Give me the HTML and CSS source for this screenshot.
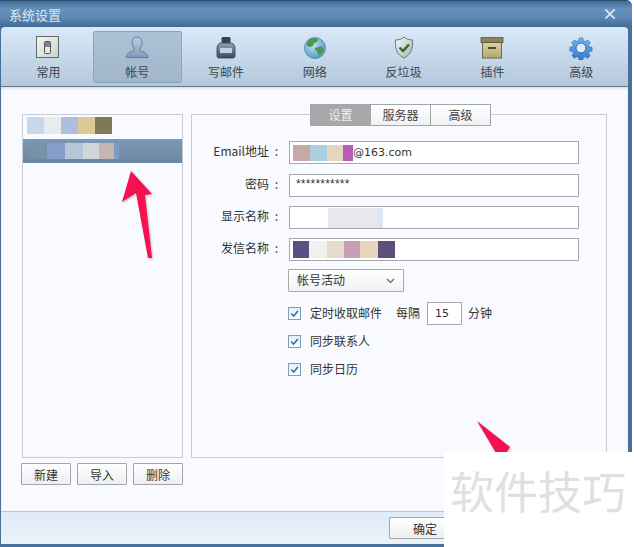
FILE: index.html
```html
<!DOCTYPE html>
<html lang="zh-CN">
<head>
    <meta charset="UTF-8">
    <meta name="viewport" content="width=device-width, initial-scale=1.0">
    <title>系统设置</title>
    <link rel="stylesheet" href="styles.css">
</head>
<body>
    <div class="window">
        <div class="titlebar">
            <span class="title">系统设置</span>
            <svg class="close" width="12" height="12" viewBox="0 0 13 13"><path d="M1.5 1.5l10 10M11.5 1.5l-10 10" stroke="#d5e2ef" stroke-width="2.2"/></svg>
        </div>

        <div class="toolbar">
            <div class="tool">
                <svg width="24" height="24" viewBox="0 0 24 24">
                    <defs><linearGradient id="gBox" x1="0" y1="0" x2="1" y2="1"><stop offset="0" stop-color="#f4f6f2"/><stop offset="1" stop-color="#c9d2ca"/></linearGradient></defs>
                    <rect x="0.5" y="0.5" width="22" height="21" fill="url(#gBox)" stroke="#5d6a70"/>
                    <rect x="8.5" y="5.5" width="6" height="12" rx="1" fill="#e6e9e6" stroke="#4d5559"/>
                    <rect x="9" y="6" width="5" height="5" fill="#7d8689"/>
                </svg>
                <span>常用</span>
            </div>
            <div class="tool tool-active">
                <svg width="24" height="24" viewBox="0 0 24 24">
                    <defs><linearGradient id="gUser" x1="0" y1="0" x2="0" y2="1"><stop offset="0" stop-color="#b8cde2"/><stop offset="1" stop-color="#7f9cbc"/></linearGradient></defs>
                    <path d="M12 1c-3.600 0-5 2.800-5 5.800 0 2.300 1 4.200 2.200 5.400v2.200c-1.800 1.200-7.700 2-8.200 7.100h22c-.5-5.100-6.400-5.900-8.200-7.100v-2.200c1.200-1.200 2.200-3.100 2.200-5.400 0-3-1.400-5.800-5-5.800z" fill="url(#gUser)" stroke="#5f7d9c"/>
                </svg>
                <span>帐号</span>
            </div>
            <div class="tool">
                <svg width="24" height="24" viewBox="0 0 24 24">
                    <defs><linearGradient id="gInk" x1="0" y1="0" x2="0" y2="1"><stop offset="0" stop-color="#8ea4bb"/><stop offset="1" stop-color="#2f4a66"/></linearGradient></defs>
                    <rect x="7.500" y="1" width="9" height="6" rx="1.500" fill="#39414a"/>
                    <path d="M6 7h12c2 1 3 3 3 6v7c0 1-1 2-2 2H5c-1 0-2-1-2-2v-7c0-3 1-5 3-6z" fill="url(#gInk)" stroke="#2d3d50" stroke-width=".8"/>
                    <rect x="6" y="12" width="12" height="5" fill="#c3d0dc"/>
                </svg>
                <span>写邮件</span>
            </div>
            <div class="tool">
                <svg width="24" height="24" viewBox="0 0 24 24">
                    <defs><radialGradient id="gGlobe" cx=".4" cy=".35" r=".8"><stop offset="0" stop-color="#bfe2f2"/><stop offset="1" stop-color="#3f8dbf"/></radialGradient></defs>
                    <circle cx="12" cy="12" r="10.500" fill="url(#gGlobe)" stroke="#4d86a8" stroke-width=".8"/>
                    <path d="M7 3c3-1.500 6-1 8 0l-1 3-3 1-1 3-3 1-3-1c-1-3 1-6 3-7zM12 12l6-2 3 3c-.5 3-2 5-4 6.500l-2-1.500-1-3-2-1z" fill="#4f9a4a"/>
                </svg>
                <span>网络</span>
            </div>
            <div class="tool">
                <svg width="24" height="24" viewBox="0 0 24 24">
                    <defs><linearGradient id="gShield" x1="0" y1="0" x2="1" y2="1"><stop offset="0" stop-color="#f7f8f6"/><stop offset="1" stop-color="#aab4b4"/></linearGradient></defs>
                    <path d="M12 1c2 2 5 3 8.500 3 .5 8-1 14.500-8.500 18C4.500 18.500 3 12 3.500 4 7 4 10 3 12 1z" fill="url(#gShield)" stroke="#5f6b70" stroke-width=".9"/>
                    <path d="M7.500 11.500l3.500 3.500 6-6.500" fill="none" stroke="#2f6b24" stroke-width="2.400"/>
                </svg>
                <span>反垃圾</span>
            </div>
            <div class="tool">
                <svg width="24" height="24" viewBox="0 0 24 24">
                    <defs><linearGradient id="gCrate" x1="0" y1="0" x2="0" y2="1"><stop offset="0" stop-color="#dcd2a8"/><stop offset="1" stop-color="#b3a673"/></linearGradient></defs>
                    <rect x="2.500" y="6.500" width="19" height="15.500" fill="url(#gCrate)" stroke="#6f6643"/>
                    <rect x="1" y="1.500" width="22" height="5" fill="#8d8357" stroke="#5e5738" stroke-width=".8"/>
                    <rect x="8" y="11" width="8" height="2" fill="#4f4a33"/>
                </svg>
                <span>插件</span>
            </div>
            <div class="tool">
                <svg width="24" height="24" viewBox="0 0 24 24">
                    <defs><linearGradient id="gGear" x1="0" y1="0" x2="0" y2="1"><stop offset="0" stop-color="#79b4f0"/><stop offset="1" stop-color="#2f77cf"/></linearGradient></defs>
                    <path d="M10 1h4l.6 3 2.100.9 2.600-1.700 2.800 2.800-1.700 2.600.9 2.100 3 .6v4l-3 .6-.9 2.100 1.700 2.600-2.800 2.800-2.600-1.700-2.100.9-.6 3h-4l-.6-3-2.100-.9-2.600 1.700-2.800-2.800 1.700-2.600-.9-2.100-3-.6v-4l3-.6.9-2.100-1.700-2.600 2.800-2.800 2.600 1.700 2.100-.9z" transform="translate(1.200 1.200) scale(.9)" fill="url(#gGear)" stroke="#2a66b2" stroke-width=".7"/>
                    <circle cx="12" cy="12" r="5" fill="#dfeaf6" stroke="#2a66b2"/>
                </svg>
                <span>高级</span>
            </div>
        </div>

        <div class="content">
            <div class="accounts">
                <ul class="account-list">
                    <li class="account"><span class="mosaic mosaic-name1"></span></li>
                    <li class="account account-selected"><span class="mosaic mosaic-name2"></span></li>
                </ul>
                <div class="account-actions">
                    <button class="btn">新建</button>
                    <button class="btn">导入</button>
                    <button class="btn">删除</button>
                </div>
            </div>

            <div class="panel">
                <div class="tabs">
                    <div class="tab tab-active">设置</div>
                    <div class="tab">服务器</div>
                    <div class="tab">高级</div>
                </div>

                <div class="field field-first">
                    <label>Email地址 :</label>
                    <div class="input"><span class="mosaic mosaic-mail"></span><span class="latin">@163.com</span></div>
                </div>
                <div class="field">
                    <label>密码 :</label>
                    <div class="input"><span class="stars">***********</span></div>
                </div>
                <div class="field">
                    <label>显示名称 :</label>
                    <div class="input"><span class="mosaic mosaic-display"></span></div>
                </div>
                <div class="field field-last">
                    <label>发信名称 :</label>
                    <div class="input"><span class="mosaic mosaic-sender"></span></div>
                </div>

                <div class="options">
                    <div class="select">
                        <span class="select-text">帐号活动</span>
                        <svg width="9" height="6" viewBox="0 0 9 6"><path d="M1 1l3.500 3.500L8 1" fill="none" stroke="#666" stroke-width="1.200"/></svg>
                    </div>
                    <div class="check-row check-row-first">
                        <span class="check"><svg width="11" height="11" viewBox="0 0 13 13"><path d="M2.500 6.500l3 3 5-6" fill="none" stroke="#2f77a8" stroke-width="2"/></svg></span>
                        <span class="check-label">定时收取邮件</span>
                        <span class="every">每隔</span>
                        <span class="number">15</span>
                        <span class="unit">分钟</span>
                    </div>
                    <div class="check-row">
                        <span class="check"><svg width="11" height="11" viewBox="0 0 13 13"><path d="M2.500 6.500l3 3 5-6" fill="none" stroke="#2f77a8" stroke-width="2"/></svg></span>
                        <span class="check-label">同步联系人</span>
                    </div>
                    <div class="check-row">
                        <span class="check"><svg width="11" height="11" viewBox="0 0 13 13"><path d="M2.500 6.500l3 3 5-6" fill="none" stroke="#2f77a8" stroke-width="2"/></svg></span>
                        <span class="check-label">同步日历</span>
                    </div>
                </div>
            </div>
        </div>

        <div class="footer">
            <button class="btn btn-ok">确定</button>
        </div>
    </div>

    <!-- 截图上的标注和水印 -->
    <svg class="arrow arrow-one" width="36" height="90" viewBox="0 0 36 90">
        <path d="M10 0L31 23 24 24 31 87 27 87 15 22 1 31z" fill="#f5104f"/>
    </svg>
    <svg class="arrow arrow-two" width="36" height="32" viewBox="0 0 36 32">
        <path d="M1 0L34 26 30 32 20 32z" fill="#f5104f"/>
    </svg>
    <div class="watermark">软件技巧</div>
</body>
</html>
```

FILE: styles.css
```css
body {
    margin: 0;
    background: #fff;
    font-family: "Noto Sans CJK SC", "Liberation Sans", sans-serif;
    font-size: 12px;
    color: #333;
}
.window {
    width: 632px;
    height: 547px;
    box-sizing: border-box;
    padding: 0 4px 3px 1px;
    display: flex;
    flex-direction: column;
    background: #47709a;
    border-top-right-radius: 6px;
    overflow: hidden;
}
.titlebar {
    height: 27px;
    flex: none;
    display: flex;
    align-items: center;
    justify-content: space-between;
    padding: 0 16px 0 9px;
    margin: 0 -4px 0 -1px;
    background: linear-gradient(#3f6a96, #6590bb 30%, #5f8ab5 60%, #406b98);
    border-top: 1px solid #2b4c6f;
    box-sizing: border-box;
}
.title {
    color: #dfe8f1;
    font-size: 13px;
}
.toolbar {
    height: 60px;
    flex: none;
    display: flex;
    padding: 0 0 0 3px;
    align-items: center;
    background: linear-gradient(#d9e9f9, #b4c8dc);
    border-bottom: 1px solid #66788a;
    border-radius: 4px 4px 0 0;
    box-sizing: border-box;
}
.tool {
    width: 88.8px;
    height: 52px;
    box-sizing: border-box;
    display: flex;
    flex-direction: column;
    align-items: center;
    padding-top: 5px;
    gap: 4px;
    line-height: 16px;
    color: #3b4550;
}
.tool-active {
    background: linear-gradient(#aec2d7, #a1b6cb);
    border: 1px solid #8ea4ba;
    border-radius: 2px;
    padding-top: 4px;
}
.content {
    flex: 1;
    display: flex;
    gap: 8px;
    padding: 27px 21px 0 21px;
    background: #f8faff;
    box-shadow: inset 0 2px 2px #dde3ea;
}
.accounts {
    width: 161px;
    display: flex;
    flex-direction: column;
    gap: 5px;
}
.account-list {
    list-style-type: none;
    margin: 0;
    padding: 2px 0 0;
    height: 344px;
    box-sizing: border-box;
    border: 1px solid #c9cdd2;
}
.account {
    height: 22px;
    padding-left: 4px;
}
.account-selected {
    height: 24px;
    padding: 4px 0 0 6px;
    box-sizing: border-box;
    background: linear-gradient(#7b99b7, #6c87a3);
}
.mosaic {
    display: block;
    height: 17px;
}
.mosaic-name1 {
    width: 85px;
    background: linear-gradient(90deg, #c5d9ea 20%, #e7eced 20% 40%, #abc0de 40% 60%, #dcc996 60% 80%, #7d7a55 80%);
}
.mosaic-name2 {
    width: 90px;
    height: 16px;
    background: linear-gradient(90deg, #7592ab 20%, #839ec7 20% 40%, #b7c6d6 40% 60%, #cfd7d8 60% 78%, #c6b6b3 78% 95%, #7f9bc0 95%);
}
.mosaic-mail {
    width: 60px;
    height: 16px;
    flex: none;
    background: linear-gradient(90deg, #c6a9a6 28%, #a9cfe0 28% 56%, #e5d6c2 56% 84%, #b85cb4 84%);
}
.mosaic-display {
    width: 90px;
    height: 20px;
    background: linear-gradient(90deg, #fff 39%, #e6e8ee 39% 94%, #dce6f2 94%);
}
.mosaic-sender {
    width: 102px;
    height: 17px;
    background: linear-gradient(90deg, #565284 16%, #f1f1ed 16% 33%, #e5dacb 33% 50%, #c99eb8 50% 66%, #e4d7bd 66% 83%, #5e4e78 83%);
}
.account-actions {
    display: flex;
    gap: 6px;
    margin-left: -1px;
}
.btn {
    width: 50px;
    height: 22px;
    padding: 0;
    font: inherit;
    color: #333;
    background: linear-gradient(#fff, #eceef0);
    border: 1px solid #a3a5a8;
    border-radius: 1px;
}
.panel {
    width: 416px;
    height: 344px;
    box-sizing: border-box;
    border: 1px solid #c9cdd2;
}
.tabs {
    display: flex;
    width: 180px;
    height: 22px;
    margin: -11px 0 15px 119px;
}
.tab {
    flex: 1;
    text-align: center;
    line-height: 20px;
    background: linear-gradient(#fff, #eef0f2);
    border: 1px solid #a3a5a8;
    margin-left: -1px;
    color: #444;
}
.tab-active {
    background: #a8a8a8;
    color: #eee;
}
.field {
    display: flex;
    align-items: center;
    gap: 11px;
    margin-bottom: 9px;
}
.field-first {
    margin-bottom: 10px;
}
.field-last {
    margin-bottom: 8px;
}
.field label {
    width: 86px;
    text-align: right;
    word-spacing: 3px;
    padding-bottom: 4px;
    color: #333;
}
.input {
    width: 290px;
    height: 23px;
    box-sizing: border-box;
    display: flex;
    align-items: center;
    padding-left: 3px;
    background: #fff;
    border: 1px solid #a9a9a9;
}
.latin {
    font-family: "DejaVu Sans", sans-serif;
    font-size: 11px;
    margin-top: -1px;
}
.stars {
    font-family: "Liberation Sans", sans-serif;
    font-size: 12px;
    letter-spacing: .2px;
    padding-left: 3px;
    margin-top: -3px;
}
.options {
    margin-left: 96px;
}
.select {
    width: 116px;
    height: 23px;
    box-sizing: border-box;
    display: flex;
    align-items: center;
    justify-content: space-between;
    padding: 0 8px 0 8px;
    background: linear-gradient(#fff, #f1f2f4);
    border: 1px solid #a9a9a9;
    border-radius: 1px;
}
.select-text {
    margin-bottom: 2px;
}
.check-row {
    display: flex;
    align-items: center;
    height: 28px;
}
.check-row-first {
    margin-top: 10px;
    height: 23px;
    margin-bottom: 2px;
}
.check {
    width: 13px;
    height: 13px;
    box-sizing: border-box;
    flex: none;
    border: 1px solid #7f9db9;
    background: linear-gradient(#e4eef7, #fff);
}
.check svg {
    display: block;
}
.check-label,
.every,
.unit {
    margin-bottom: 2px;
}
.check-label {
    margin-left: 9px;
}
.every {
    margin-left: 14px;
}
.number {
    width: 35px;
    height: 23px;
    box-sizing: border-box;
    margin-left: 7px;
    padding-left: 7px;
    line-height: 21px;
    background: #fff;
    border: 1px solid #a9a9a9;
    font-family: "DejaVu Sans", sans-serif;
    font-size: 11px;
}
.unit {
    margin-left: 6px;
}
.footer {
    height: 33px;
    flex: none;
    box-sizing: border-box;
    padding: 5px 0 0 388px;
    background: linear-gradient(#dfebf7, #eaf3fb);
    border-top: 1px solid #b9c4cf;
}
.btn-ok {
    width: 74px;
    height: 22px;
    text-align: left;
    padding-left: 23px;
}
.arrow {
    position: absolute;
    filter: drop-shadow(1px 1px 1px rgba(0, 0, 0, .25));
}
.arrow-one {
    left: 121px;
    top: 171px;
}
.arrow-two {
    left: 476px;
    top: 421px;
}
.watermark {
    position: absolute;
    left: 444px;
    top: 452px;
    width: 190px;
    height: 95px;
    box-sizing: border-box;
    padding: 8px 0 0 6px;
    background: #fff;
    color: #e0e0e0;
    font-size: 44px;
    line-height: 60px;
    white-space: nowrap;
}
```
